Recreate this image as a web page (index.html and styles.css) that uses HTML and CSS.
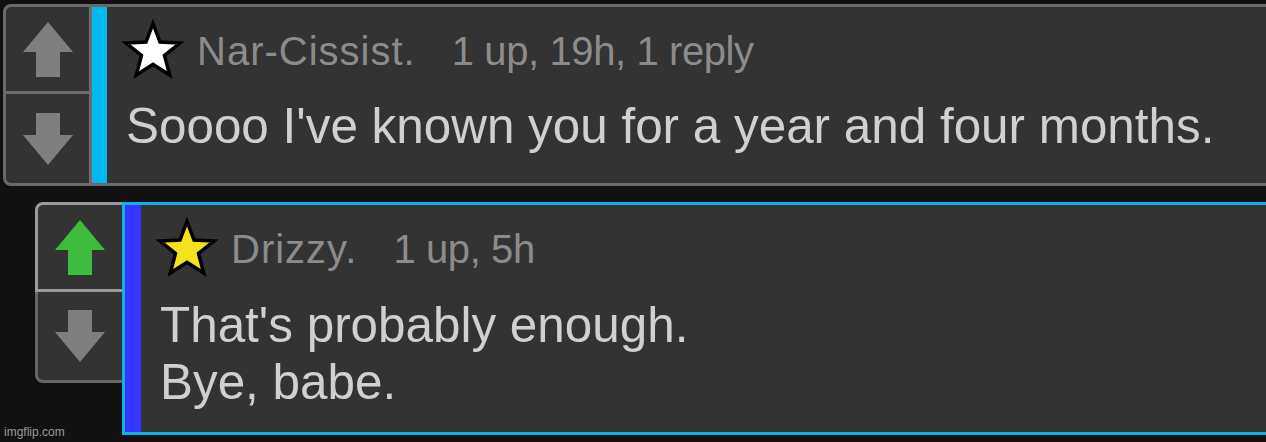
FILE: index.html
```html
<!DOCTYPE html>
<html lang="en">
<head>
    <meta charset="UTF-8">
    <meta name="viewport" content="width=device-width, initial-scale=1.0">
    <title>Comments</title>
    <link rel="stylesheet" href="styles.css">
</head>
<body>
    <div class="thread">
        <div class="comment root">
            <div class="votes">
                <div class="vote up">
                    <svg class="arrow" width="50" height="55" viewBox="0 0 50 55"><polygon points="25,0 50,30 37,30 37,55 13,55 13,30 0,30"/></svg>
                </div>
                <div class="vote down">
                    <svg class="arrow" width="50" height="52" viewBox="0 0 50 52"><polygon points="13,0 37,0 37,22 50,22 25,52 0,22 13,22"/></svg>
                </div>
            </div>
            <div class="content lvl0">
                <div class="header">
                    <svg class="star" width="60" height="60" viewBox="0 0 60 60"><polygon fill="#fff" points="30,4.5 37,23 57,24 41.5,36.5 46.7,56 30,45.3 13.3,56 18.5,36.5 3,24 23,23"/></svg>
                    <span class="meta">
                        <span class="name">Nar-Cissist.</span>
                        <span class="info">1 up, 19h, 1 reply</span>
                    </span>
                </div>
                <div class="body">Soooo I've known you for a year and four months.</div>
            </div>
        </div>

        <div class="comment reply">
            <div class="votes">
                <div class="vote up active">
                    <svg class="arrow" width="50" height="55" viewBox="0 0 50 55"><polygon points="25,0 50,30 37,30 37,55 13,55 13,30 0,30"/></svg>
                </div>
                <div class="vote down">
                    <svg class="arrow" width="50" height="52" viewBox="0 0 50 52"><polygon points="13,0 37,0 37,22 50,22 25,52 0,22 13,22"/></svg>
                </div>
            </div>
            <div class="content lvl1">
                <div class="header">
                    <svg class="star" width="60" height="60" viewBox="0 0 60 60"><polygon fill="#f5e21c" points="30,4.5 37,23 57,24 41.5,36.5 46.7,56 30,45.3 13.3,56 18.5,36.5 3,24 23,23"/></svg>
                    <span class="meta">
                        <span class="name">Drizzy.</span>
                        <span class="info">1 up, 5h</span>
                    </span>
                </div>
                <div class="body">That's probably enough.<br>Bye, babe.</div>
            </div>
        </div>
    </div>
    <div class="watermark">imgflip.com</div>
</body>
</html>
```

FILE: styles.css
```css
body {
    margin: 0;
    height: 442px;
    background-color: #111;
    font-family: "Liberation Sans", Arial, sans-serif;
    overflow: hidden;
    position: relative;
}
.thread {
    padding: 4px 0 0 3px;
    overflow: hidden;
}
.comment {
    display: flex;
    margin-right: -20px;
}
.root {
    background-color: #333;
    border: 3px solid #6b6b6b;
    border-radius: 8px 0 0 8px;
}
.reply {
    margin-top: 16px;
    margin-left: 32px;
    align-items: flex-start;
}
.votes {
    display: flex;
    flex-direction: column;
    flex-shrink: 0;
}
.root .votes {
    width: 83px;
    border-right: 3px solid #6b6b6b;
}
.vote {
    display: flex;
    justify-content: center;
    align-items: center;
}
.root .up {
    height: 84px;
    border-bottom: 3px solid #6b6b6b;
}
.root .down {
    height: 89px;
}
.reply .votes {
    width: 90px;
    margin-right: -3px;
}
.reply .vote {
    background-color: #333;
    border: 3px solid #666;
}
.reply .up {
    height: 84px;
    border-color: #9a9a9a;
    border-radius: 8px 0 0 0;
}
.reply .down {
    height: 88px;
    border-top: none;
    border-radius: 0 0 0 8px;
}
.arrow {
    display: block;
    fill: #7f7f7f;
}
.active .arrow {
    fill: #3fbb3f;
}
.content {
    flex: 1;
    background-color: #333;
    padding: 12px 16px 22px;
}
.lvl0 {
    border-left: 15px solid #00b8f0;
    padding-left: 16px;
}
.lvl1 {
    border: 3px solid #0cb4e6;
    box-shadow: inset 16px 0 0 #3636ff;
    padding-left: 32px;
}
.header {
    display: flex;
    align-items: center;
    height: 60px;
}
.star {
    display: block;
    flex-shrink: 0;
    overflow: visible;
}
.star polygon {
    stroke: #000;
    stroke-width: 3.5;
}
.meta {
    margin-left: 14px;
    margin-top: 5px;
    font-size: 40px;
    color: #8c8c8c;
    white-space: nowrap;
}
.name {
    letter-spacing: 1px;
}
.info {
    margin-left: 25px;
    letter-spacing: -0.4px;
}
.body {
    margin-top: 18px;
    padding-left: 3px;
    font-size: 49.4px;
    line-height: 57px;
    color: #d0d0d0;
    white-space: nowrap;
}
.lvl1 .body {
    margin-top: 19px;
}
.watermark {
    position: absolute;
    left: 4px;
    bottom: 3px;
    font-size: 12px;
    color: #9a9a9a;
}
```
